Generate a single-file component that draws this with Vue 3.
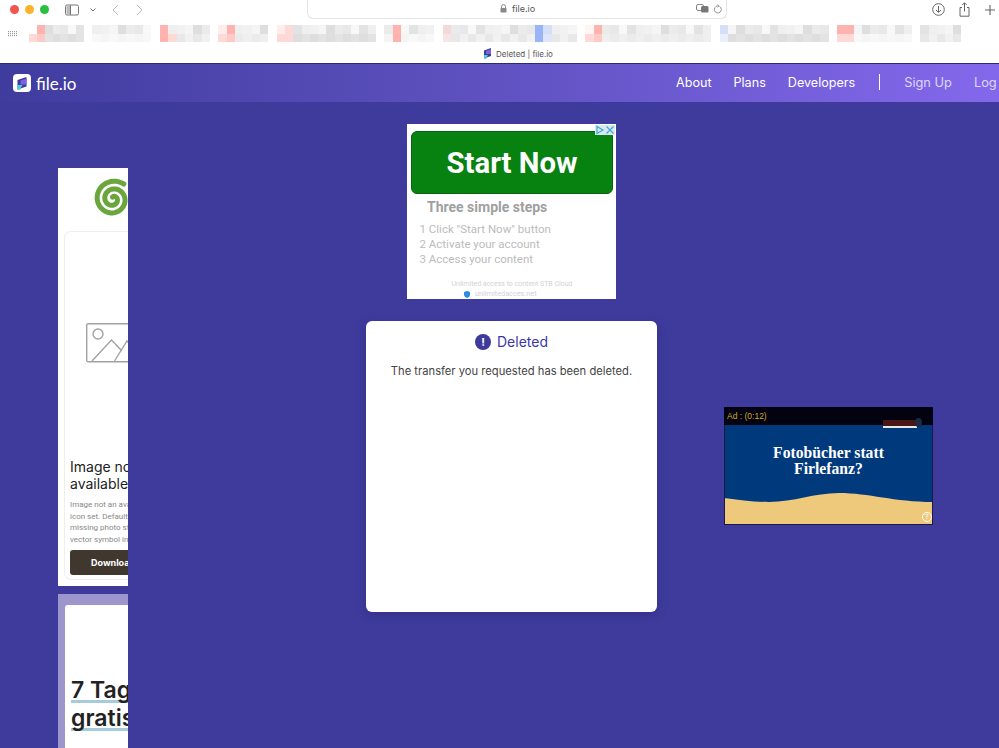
<script setup>
const pink = '#ffb3ae'
const soft = '#ffd9d6'
const faint = '#ffeceb'
const blue = '#99b5f7'
const pale = '#d5dff8'
const groups = [
  { width: 55, cols: 7, accents: { 0: '#fff', 1: pink, 7: soft, 8: '#ffc9c5' } },
  { width: 59, cols: 7, accents: {} },
  { width: 50, cols: 6, accents: { 0: pink, 6: pink, 7: soft } },
  { width: 50, cols: 6, accents: { 0: faint, 1: pink, 6: soft, 7: '#ffc9c5' } },
  { width: 99, cols: 12, accents: { 0: faint, 1: soft, 12: soft, 13: soft } },
  { width: 50, cols: 6, accents: { 1: pink, 7: pink } },
  { width: 134, cols: 16, accents: { 0: '#f3d9d9', 16: '#f8e4e4', 11: blue, 12: pale, 27: blue, 28: '#dfe6fa' } },
  { width: 126, cols: 15, accents: { 0: '#fff5f4', 1: pink, 15: soft, 16: '#ffc9c5' } },
  { width: 109, cols: 13, accents: { 0: pale, 13: '#eaf0fb' } },
  { width: 75, cols: 9, accents: { 0: pink, 1: pink, 9: soft, 10: soft } },
  { width: 41, cols: 5, accents: {} }
]
const greys = ['#f1f1f1', '#ebebeb', '#e3e3e3', '#f5f5f5', '#e8e8e8', '#efefef', '#dedede', '#f8f8f8']
const cellsFor = (group, groupIndex) => {
  const cells = []
  for (let row = 0; row < 2; row++) {
    for (let col = 0; col < group.cols; col++) {
      const index = row * group.cols + col
      const grey = greys[(col * 3 + groupIndex * 5 + row * (col + 2)) % greys.length]
      cells.push(group.accents[index] || grey)
    }
  }
  return cells
}
const blurGroups = groups.map((group, i) => ({
  columns: `repeat(${group.cols}, ${group.width / group.cols}px)`,
  cells: cellsFor(group, i)
}))
const navLinks = ['About', 'Plans', 'Developers']
const steps = ['1 Click "Start Now" button', '2 Activate your account', '3 Access your content']
const stockLines = ['Image not an available', 'icon set. Default', 'missing photo stock', 'vector symbol in']

const spiralPath = (() => {
  const points = []
  const turns = 2.15
  const endAngle = -Math.PI * 0.3
  for (let i = 0; i <= 90; i++) {
    const t = i / 90
    const angle = endAngle - (1 - t) * turns * 2 * Math.PI
    const radius = 2 + t * 16.500
    const x = 20 + radius * Math.cos(angle)
    const y = 20 + radius * Math.sin(angle)
    points.push(`${x.toFixed(2)} ${y.toFixed(2)}`)
  }
  return 'M' + points.join('L')
})()
</script>

<template>
  <div class="page">
    <header class="chrome">
      <div class="toolbar">
        <div class="lights">
          <span class="light red"></span>
          <span class="light amber"></span>
          <span class="light green"></span>
        </div>
        <svg class="sidebar-icon" width="14" height="12" viewBox="0 0 14 12" fill="none" stroke="#777" stroke-width="1">
          <rect x="0.5" y="1" width="13" height="10" rx="1.5" />
          <rect x="1.5" y="2" width="3.5" height="8" fill="#bbb" stroke="none" />
          <path d="M5.5 1v10" />
        </svg>
        <svg class="chevron" width="6" height="4" viewBox="0 0 6 4" fill="none" stroke="#777" stroke-width="1">
          <path d="M0.5 0.5 3 3l2.5-2.5" />
        </svg>
        <svg class="back" width="7" height="12" viewBox="0 0 7 12" fill="none" stroke="#bbb" stroke-width="1">
          <path d="M6 1 1 6l5 5" />
        </svg>
        <svg class="forward" width="7" height="12" viewBox="0 0 7 12" fill="none" stroke="#bbb" stroke-width="1">
          <path d="m1 1 5 5-5 5" />
        </svg>
        <div class="address">
          <svg class="lock" width="7" height="9" viewBox="0 0 7 9">
            <path d="M1.5 4V2.6a2 2 0 0 1 4 0V4" fill="none" stroke="#888" />
            <rect x="0.5" y="4" width="6" height="4.6" rx="0.8" fill="#888" />
          </svg>
          <span class="host">file.io</span>
          <svg class="translate" width="13" height="9" viewBox="0 0 13 9">
            <rect x="0.5" y="0.5" width="7" height="6" rx="1.5" fill="#fff" stroke="#888" />
            <rect x="5" y="2" width="7.5" height="6.5" rx="1.5" fill="#777" />
          </svg>
          <svg class="reload" width="9" height="10" viewBox="0 0 9 10" fill="none" stroke="#888" stroke-width="0.9">
            <path d="M6.8 2.6A3.5 3.5 0 1 1 4.5 2H6" />
            <path d="M4.8 0.6 6.2 2 4.8 3.4" />
          </svg>
        </div>
        <svg class="download" width="13" height="13" viewBox="0 0 13 13" fill="none" stroke="#666" stroke-width="1">
          <circle cx="6.5" cy="6.5" r="5.8" />
          <path d="M6.5 3v6.2M4 7l2.5 2.4L9 7" />
        </svg>
        <svg class="share" width="11" height="15" viewBox="0 0 11 15" fill="none" stroke="#666" stroke-width="1">
          <path d="M3 5.5H1v8.7h9V5.5H8M5.5 9.5V0.8M3.3 3l2.2-2.2L7.7 3" />
        </svg>
        <svg class="plus" width="10" height="10" viewBox="0 0 10 10" stroke="#666" stroke-width="1.1">
          <path d="M5 0v10M0 5h10" />
        </svg>
      </div>
      <div class="bookmarks">
        <svg class="grid-icon" width="9" height="6" viewBox="0 0 9 6" fill="#999">
          <g v-for="y in [0, 2, 4]" :key="y">
            <rect v-for="x in [0, 2, 4, 6, 8]" :key="x" :x="x" :y="y" width="1" height="1.2" />
          </g>
        </svg>
        <div class="blur-row">
          <div
            v-for="(group, g) in blurGroups"
            :key="g"
            class="blur-group"
            :style="{ gridTemplateColumns: group.columns }"
          >
            <span v-for="(cell, c) in group.cells" :key="c" class="blur-cell" :style="{ background: cell }"></span>
          </div>
        </div>
      </div>
      <div class="tabline">
        <svg width="9" height="11" viewBox="0 0 9 11">
          <path d="M1 2.5 8 0v8L1 10.5z" fill="#3f3b9c" />
          <path d="M1 7h4l-2 4-2-.5z" fill="#4ecbd8" />
          <path d="M3 3l5-2v5H3z" fill="#7a62e0" />
        </svg>
        <span>Deleted | file.io</span>
      </div>
    </header>

    <nav class="nav">
      <div class="brand">
        <span class="brand-mark">
          <svg width="12" height="13" viewBox="0 0 12 13">
            <path d="M1.5 3 10.5 0v9.5L1.5 12.5z" fill="#3f3b9c" />
            <path d="M4.5 3.6 10.5 1.4v6.2H4.5z" fill="#7a62e0" />
            <path d="M1.5 8h5l-3 5-2-.5z" fill="#4ecbd8" />
          </svg>
        </span>
        <span class="brand-name">file.io</span>
      </div>
      <div class="links">
        <a v-for="link in navLinks" :key="link" class="link">{{ link }}</a>
        <span class="divider"></span>
        <a class="link faint">Sign Up</a>
        <a class="link faint login">Log In</a>
      </div>
    </nav>

    <main class="stage">
      <aside class="left">
        <div class="stock-ad">
          <svg class="spiral" width="40" height="40" viewBox="0 0 40 40" fill="none" stroke="#6aa63c" stroke-width="5" stroke-linecap="round">
            <path :d="spiralPath" />
          </svg>
          <div class="stock-card">
            <svg class="picture" width="64" height="40" viewBox="0 0 64 40" fill="none" stroke="#a2a2a2" stroke-width="1.4">
              <rect x="0.7" y="0.7" width="62" height="38" rx="1.5" />
              <circle cx="12" cy="11" r="5" />
              <path d="M6 38 25.500 17 36 28M28.500 38 41 18l13 15" />
            </svg>
            <h3 class="stock-title">Image not<br />available in</h3>
            <p v-for="line in stockLines" :key="line" class="stock-line">{{ line }}</p>
            <div class="stock-button">Download</div>
          </div>
        </div>
        <div class="promo-ad">
          <div class="promo-inner">
            <p class="promo-title"><span class="underlined">7 Tage</span><br /><span class="underlined">gratis</span></p>
          </div>
        </div>
      </aside>

      <section class="center">
        <div class="start-ad">
          <div class="ad-choices">
            <svg width="10" height="10" viewBox="0 0 10 10" fill="none" stroke="#40a9d8" stroke-width="1.2">
              <path d="M2 1.500v7l6-3.500z" />
            </svg>
            <svg width="10" height="10" viewBox="0 0 10 10" fill="none" stroke="#40a9d8" stroke-width="1.2">
              <path d="m1.500 1.500 7 7M8.500 1.500l-7 7" />
            </svg>
          </div>
          <div class="start-button">Start Now</div>
          <h4 class="steps-title">Three simple steps</h4>
          <p v-for="step in steps" :key="step" class="step">{{ step }}</p>
          <p class="ad-foot">Unlimited access to content STB Cloud</p>
          <p class="ad-url">
            <svg width="6" height="7" viewBox="0 0 6 7"><path d="M0 1 3 0l3 1v2.500C6 5.500 4.500 6.500 3 7 1.500 6.500 0 5.500 0 3.500z" fill="#2a8ee0" /></svg>
            <span>unlimitedacces.net</span>
          </p>
        </div>
        <article class="card">
          <h1 class="card-title">
            <span class="alert">!</span>
            <span>Deleted</span>
          </h1>
          <p class="card-text">The transfer you requested has been deleted.</p>
        </article>
      </section>

      <aside class="right">
        <div class="video-ad">
          <div class="video-bar">
            <span class="timer">Ad : (0:12)</span>
            <span class="bar-badge"></span>
            <span class="bar-gear"></span>
          </div>
          <div class="video-body">
            <p class="video-text">Fotobücher statt<br />Firlefanz?</p>
            <svg class="sand" width="209" height="33" viewBox="0 0 209 33" preserveAspectRatio="none">
              <path d="M0 6C15 8 30 10 45 10 70 10 90 1 115 1c30 0 55 9 94 9v23H0z" fill="#eec97c" />
            </svg>
            <span class="help">?</span>
          </div>
        </div>
      </aside>
    </main>
  </div>
</template>

<style scoped>
.page {
  width: 999px;
  height: 748px;
  overflow: hidden;
  display: flex;
  flex-direction: column;
  background: #3f3b9c;
  font-family: Inter, "Liberation Sans", sans-serif;
}
.chrome {
  height: 63px;
  flex: none;
  background: #fff;
  border-bottom: 1px solid #2c2a70;
  box-sizing: content-box;
}
.toolbar {
  height: 19px;
  display: flex;
  align-items: center;
  position: relative;
}
.lights {
  display: flex;
  gap: 5.8px;
  margin-left: 10px;
}
.light {
  width: 9px;
  height: 9px;
  border-radius: 50%;
}
.red { background: #f4544e; }
.amber { background: #fbb327; }
.green { background: #2ac03f; }
.sidebar-icon { margin-left: 16.400px; }
.chevron { margin-left: 11px; }
.back { margin-left: 16px; }
.forward { margin-left: 17px; }
.address {
  margin-left: 164px;
  margin-top: -1px;
  width: 420px;
  height: 19px;
  box-sizing: border-box;
  border: 1px solid #e4e4e4;
  border-top: 0;
  border-radius: 0 0 6px 6px;
  display: flex;
  align-items: center;
  font-size: 9px;
  color: #555;
}
.lock { margin-left: 192px; }
.host { margin-left: 5px; }
.translate { margin-left: 161px; }
.reload { margin-left: 4px; }
.download { margin-left: 205px; }
.share { margin-left: 14px; }
.plus { margin-left: 15px; }
.bookmarks {
  height: 23px;
  display: flex;
  align-items: flex-start;
  padding-top: 6px;
  box-sizing: border-box;
}
.grid-icon {
  margin: 6px 0 0 8px;
}
.blur-row {
  display: flex;
  gap: 8.500px;
  margin-left: 12px;
}
.blur-group {
  display: grid;
  grid-auto-rows: 8.5px;
}
.blur-cell {
  display: block;
}
.tabline {
  height: 21px;
  display: flex;
  align-items: center;
  justify-content: center;
  gap: 4px;
  font-size: 8px;
  color: #555;
  padding: 2px 0 0 37px;
  box-sizing: border-box;
}
.nav {
  height: 38px;
  flex: none;
  display: flex;
  align-items: center;
  justify-content: space-between;
  background: linear-gradient(90deg, #403c9e 0%, #5c50bd 45%, #8468ec 100%);
  overflow: hidden;
}
.brand {
  display: flex;
  align-items: center;
  margin-left: 13px;
  gap: 5px;
}
.brand-mark {
  width: 18px;
  height: 18px;
  border-radius: 4px;
  background: #fff;
  display: flex;
  align-items: center;
  justify-content: center;
}
.brand-name {
  color: #fff;
  font-family: Lato, sans-serif;
  font-size: 17px;
  line-height: 20px;
  padding-top: 1px;
}
.links {
  display: flex;
  align-items: center;
  white-space: nowrap;
  flex: none;
  width: 323px;
  gap: 22px;
  padding-bottom: 2px;
  box-sizing: border-box;
}
.link {
  flex: none;
  color: #fff;
  font-size: 12.600px;
  font-weight: 400;
}
.link.faint {
  color: #ddd8f8;
  font-size: 12.800px;
}
.divider {
  flex: none;
  width: 1px;
  height: 16px;
  background: #fff;
  margin: 0 2px 0 2px;
}
.stage {
  flex: 1;
  min-height: 0;
  display: grid;
  grid-template-columns: 70px 291px 209px;
  column-gap: 0;
  padding-left: 58px;
  overflow: hidden;
}
.left {
  padding-top: 66px;
  display: flex;
  flex-direction: column;
  gap: 8px;
  width: 70px;
  overflow: hidden;
}
.stock-ad {
  height: 418px;
  flex: none;
  background: #fff;
  position: relative;
  overflow: hidden;
  width: 70px;
}
.spiral {
  display: block;
  overflow: visible;
  margin: 11px 0 0 35px;
}
.stock-card {
  width: 200px;
  height: 349px;
  margin: 12px 0 0 6px;
  box-sizing: border-box;
  border: 1px solid #eee;
  border-radius: 7px;
  padding: 91px 0 0 21px;
}
.picture {
  display: block;
  margin-bottom: 95px;
}
.stock-title {
  margin: 0 0 7px -16px;
  font-size: 14px;
  font-weight: 400;
  line-height: 17px;
  color: #222;
  white-space: nowrap;
}
.stock-line {
  margin: 0 0 0 -16px;
  font-family: Roboto, sans-serif;
  font-size: 8px;
  line-height: 11.700px;
  color: #888;
  white-space: nowrap;
}
.stock-button {
  margin: 4px 0 0 -16px;
  width: 160px;
  height: 25px;
  border-radius: 3px;
  background: #40382f;
  color: #fff;
  font-size: 9px;
  font-weight: 700;
  line-height: 25px;
  padding-left: 21px;
  box-sizing: border-box;
}
.promo-ad {
  flex: 1;
  background: #9c96cc;
  padding: 11px 0 0 7px;
  overflow: hidden;
}
.promo-inner {
  width: 200px;
  height: 160px;
  background: #fff;
  border-radius: 3px 0 0 0;
  padding-top: 71px;
  padding-left: 6px;
  box-sizing: border-box;
}
.promo-title {
  margin: 0;
  font-size: 23px;
  font-weight: 600;
  line-height: 28px;
  color: #222;
  white-space: nowrap;
}
.underlined {
  background: linear-gradient(#a6cbdc, #a6cbdc) no-repeat 0 24px / 100% 3px;
}
.center {
  display: flex;
  flex-direction: column;
  align-items: center;
  gap: 22px;
  padding-top: 22px;
  margin-left: 238px;
  grid-column: 2;
  width: 291px;
}
.start-ad {
  width: 209px;
  height: 175px;
  background: #fff;
  position: relative;
  flex: none;
  padding: 7px 3px 0 4px;
  box-sizing: border-box;
  font-family: Roboto, sans-serif;
}
.ad-choices {
  position: absolute;
  top: 1px;
  right: 1px;
  display: flex;
  background: #d8e8ee;
}
.ad-choices svg { display: block; }
.start-button {
  height: 63px;
  background: #078211;
  border: 1px solid #05640c;
  box-sizing: border-box;
  border-radius: 6px;
  color: #fff;
  font-size: 29.300px;
  font-weight: 700;
  text-align: center;
  line-height: 62px;
}
.steps-title {
  margin: 5px 0 5.500px 16px;
  font-size: 14px;
  font-weight: 700;
  line-height: 17px;
  color: #a0a0a0;
}
.step {
  margin: 0 0 0 8.500px;
  font-size: 11.500px;
  line-height: 15.300px;
  color: #bcbcbc;
}
.ad-foot {
  margin: 13px 0 0;
  font-size: 7px;
  line-height: 9px;
  text-align: center;
  color: #d2d2d2;
}
.ad-url {
  margin: 0 0 0 53px;
  display: flex;
  align-items: center;
  gap: 5px;
  font-size: 7.300px;
  line-height: 10px;
  color: #d2d2d2;
}
.card {
  width: 291px;
  height: 291px;
  flex: none;
  box-sizing: border-box;
  background: #fff;
  border-radius: 6px;
  box-shadow: 0 3px 10px rgba(20, 18, 80, 0.25);
  padding-top: 12px;
  text-align: center;
}
.card-title {
  margin: 0;
  display: flex;
  align-items: center;
  justify-content: center;
  gap: 6px;
  font-size: 14px;
  font-weight: 400;
  line-height: 18px;
  color: #3b38a6;
}
.alert {
  width: 16px;
  height: 16px;
  border-radius: 50%;
  background: #3f3b9c;
  color: #fff;
  font-size: 11px;
  font-weight: 700;
  line-height: 16px;
  text-align: center;
}
.card-text {
  margin: 13px 0 0;
  font-size: 11.200px;
  line-height: 15px;
  color: #444;
}
.right {
  padding-top: 305px;
  margin-left: 305px;
  grid-column: 3;
  width: 209px;
}
.video-ad {
  width: 209px;
  height: 118px;
  display: flex;
  flex-direction: column;
  position: relative;
}
.video-ad::after {
  content: "";
  position: absolute;
  inset: 0;
  border: 1px solid #1a1a4a;
  pointer-events: none;
}
.video-bar {
  height: 18px;
  flex: none;
  background: #020210;
  display: flex;
  align-items: center;
  position: relative;
  z-index: 1;
  padding-left: 3px;
}
.timer {
  color: #d0a92a;
  font-family: "Liberation Sans", sans-serif;
  font-size: 8.500px;
}
.bar-badge {
  position: absolute;
  left: 159px;
  top: 13px;
  width: 34px;
  height: 8px;
  background: linear-gradient(#4a1515, #4a1515) no-repeat 0 0 / 100% 6px, #e8e8e8;
}
.bar-gear {
  position: absolute;
  left: 191px;
  top: 11px;
  width: 7px;
  height: 9px;
  border-radius: 50%;
  background: #1c2a44;
}
.video-body {
  flex: 1;
  background: #003a7d;
  position: relative;
  overflow: hidden;
  text-align: center;
  padding-top: 20px;
  box-sizing: border-box;
}
.video-text {
  margin: 0;
  font-family: "Liberation Serif", serif;
  font-size: 15.700px;
  font-weight: 700;
  line-height: 16px;
  color: #fff;
}
.sand {
  position: absolute;
  left: 0;
  bottom: 0;
  display: block;
}
.help {
  position: absolute;
  right: 1px;
  bottom: 3px;
  width: 8px;
  height: 8px;
  border: 1px solid #fff;
  border-radius: 50%;
  color: #fff;
  font-size: 6px;
  line-height: 8px;
  text-align: center;
}
</style>

<style>
html, body { margin: 0; background: #3f3b9c; }
</style>
